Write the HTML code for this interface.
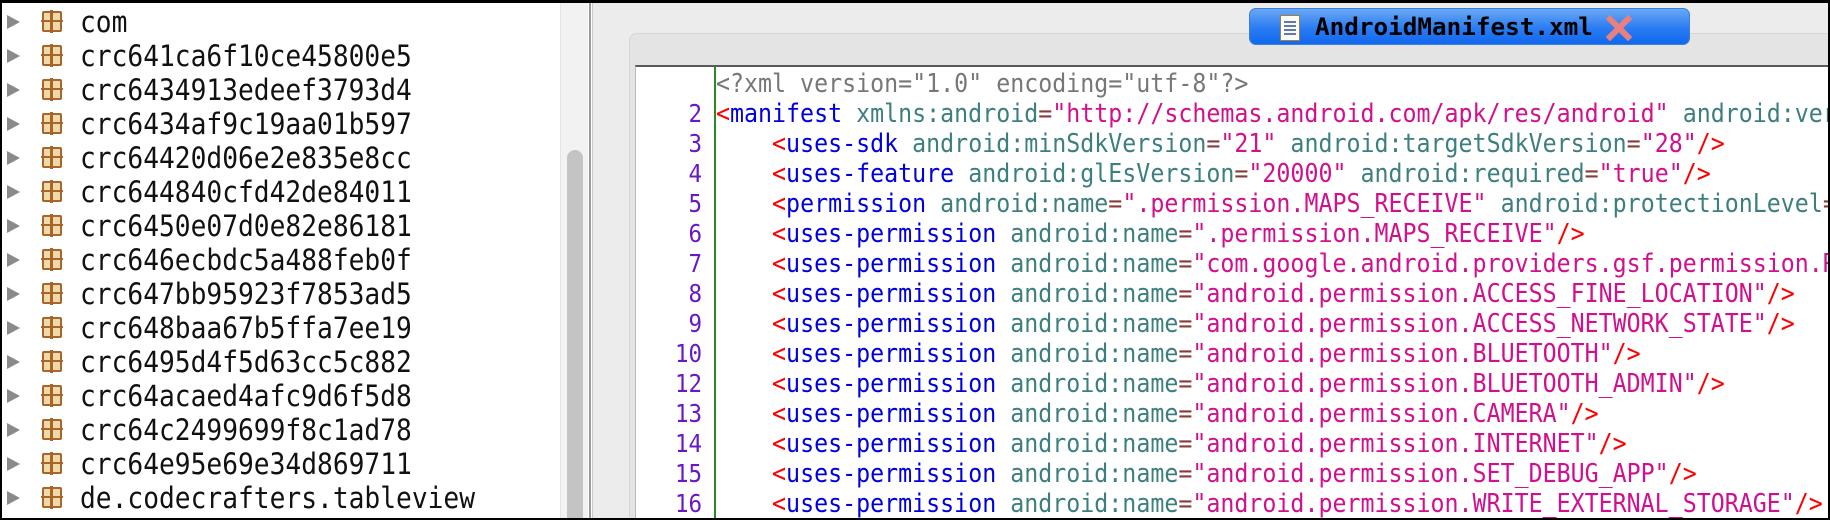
<!DOCTYPE html>
<html><head><meta charset="utf-8"><style>
*{margin:0;padding:0;box-sizing:border-box}
body{width:1830px;height:520px;overflow:hidden;background:#fff;position:relative;font-family:"DejaVu Sans Mono","Liberation Mono",monospace}
#frame{position:absolute;left:0;top:0;width:1830px;height:520px;border:2px solid #000;border-top-width:3px;pointer-events:none;z-index:10}
.tree{position:absolute;left:0;top:0;width:560px;height:520px;background:#fff;overflow:hidden}
.row{position:absolute;left:0;height:34px;width:560px;font-size:29px;line-height:34px;color:#111;white-space:pre}
.row .tri{position:absolute;left:7px;top:10px;width:0;height:0;border-left:13px solid #8a8a8a;border-top:7px solid transparent;border-bottom:7px solid transparent}
.row .ic{position:absolute;left:42px;top:6px;width:20px;height:21px;background:#f0d9a8;border:2px solid #a8652a;border-radius:2px}
.row .ic:before{content:"";position:absolute;left:6px;top:-3px;width:3px;height:23px;background:#a8652a}
.row .ic:after{content:"";position:absolute;left:-3px;top:7px;width:22px;height:2px;background:#a8652a}
.row .t{position:absolute;left:80px;top:0;transform:scaleX(0.905);transform-origin:0 0}
.track{position:absolute;left:560px;top:0;width:28px;height:520px;background:#f2f2f2;border-left:1px solid #e4e4e4}
.thumb{position:absolute;left:567px;top:150px;width:16px;height:370px;background:#c4c4c4;border-radius:8px 8px 0 0}
.div1{position:absolute;left:589px;top:0;width:2px;height:520px;background:#9a9a9a}
.div2{position:absolute;left:592px;top:0;width:1px;height:520px;background:#c8c8c8}
.right{position:absolute;left:593px;top:0;width:1237px;height:520px;background:#ececec}
.panel{position:absolute;left:629px;top:33px;width:1201px;height:487px;background:#e4e4e4;border:1px solid #d6d6d6;border-radius:8px 0 0 0}
.editor{position:absolute;left:635px;top:65px;width:1195px;height:455px;background:#fff;border-top:2px solid #5a5a5a;border-left:1px solid #bbb}
.clip{position:absolute;left:0;top:0;width:1828px;height:520px;overflow:hidden}
.green{position:absolute;left:714px;top:67px;width:2px;height:453px;background:#2a8a2a}
.ln{position:absolute;left:640px;width:62px;text-align:right;font-size:25px;line-height:30px;color:#6a18c4}
.ln span{display:inline-block;transform:scaleX(0.9);transform-origin:100% 0}
.code{position:absolute;left:716px;font-size:26px;line-height:30px;white-space:pre;color:#3d7f7f;transform:scaleX(0.895);transform-origin:0 0}
.r{color:#f00}.b{color:#0000dd}.a{color:#3d7f7f}.e{color:#8b3a3a}.v{color:#d0108c}.g{color:#777}
.tab{position:absolute;left:1249px;top:8px;width:441px;height:37px;border-radius:7px;background:linear-gradient(#6aa8f5,#2a7cf2 55%,#1168ee);border:1px solid #3b7fd8}
.tab .txt{position:absolute;left:65px;top:3px;font-size:24.3px;font-weight:bold;line-height:30px;color:#000}
.doc{position:absolute;left:30px;top:6px;width:20px;height:26px;background:#fafaf0;border:1px solid #a08040}
.doc i{position:absolute;left:3px;width:12px;height:2px;background:#5a7ab0}
.x{position:absolute;left:356px;top:6px;width:26px;height:26px}
</style></head><body>
<div class="tree">
<div class="row" style="top:5px"><span class="tri"></span><span class="ic"></span><span class="t">com</span></div>
<div class="row" style="top:39px"><span class="tri"></span><span class="ic"></span><span class="t">crc641ca6f10ce45800e5</span></div>
<div class="row" style="top:73px"><span class="tri"></span><span class="ic"></span><span class="t">crc6434913edeef3793d4</span></div>
<div class="row" style="top:107px"><span class="tri"></span><span class="ic"></span><span class="t">crc6434af9c19aa01b597</span></div>
<div class="row" style="top:141px"><span class="tri"></span><span class="ic"></span><span class="t">crc64420d06e2e835e8cc</span></div>
<div class="row" style="top:175px"><span class="tri"></span><span class="ic"></span><span class="t">crc644840cfd42de84011</span></div>
<div class="row" style="top:209px"><span class="tri"></span><span class="ic"></span><span class="t">crc6450e07d0e82e86181</span></div>
<div class="row" style="top:243px"><span class="tri"></span><span class="ic"></span><span class="t">crc646ecbdc5a488feb0f</span></div>
<div class="row" style="top:277px"><span class="tri"></span><span class="ic"></span><span class="t">crc647bb95923f7853ad5</span></div>
<div class="row" style="top:311px"><span class="tri"></span><span class="ic"></span><span class="t">crc648baa67b5ffa7ee19</span></div>
<div class="row" style="top:345px"><span class="tri"></span><span class="ic"></span><span class="t">crc6495d4f5d63cc5c882</span></div>
<div class="row" style="top:379px"><span class="tri"></span><span class="ic"></span><span class="t">crc64acaed4afc9d6f5d8</span></div>
<div class="row" style="top:413px"><span class="tri"></span><span class="ic"></span><span class="t">crc64c2499699f8c1ad78</span></div>
<div class="row" style="top:447px"><span class="tri"></span><span class="ic"></span><span class="t">crc64e95e69e34d869711</span></div>
<div class="row" style="top:481px"><span class="tri"></span><span class="ic"></span><span class="t">de.codecrafters.tableview</span></div>
</div>
<div class="track"></div><div class="thumb"></div>
<div class="div1"></div><div class="div2"></div>
<div class="right"></div>
<div class="panel"></div>
<div class="editor"></div>
<div class="green"></div>
<div class="tab"><div class="doc"><i style="top:5px"></i><i style="top:9px"></i><i style="top:13px"></i><i style="top:17px"></i></div><span class="txt">AndroidManifest.xml</span>
<svg class="x" viewBox="0 0 26 26"><path d="M4 4L22 22M22 4L4 22" stroke="#e88080" stroke-width="6" stroke-linecap="square"/></svg></div>
<div class="clip">
<div class="code" style="top:69px"><span class="g">&lt;?xml version="1.0" encoding="utf-8"?&gt;</span></div>
<div class="ln" style="top:99px"><span>2</span></div><div class="code" style="top:99px"><span class="r">&lt;</span><span class="b">manifest</span> xmlns:android<span class="e">=</span><span class="v">"http://schemas.android.com/apk/res/android"</span> android:ver</div>
<div class="ln" style="top:129px"><span>3</span></div><div class="code" style="top:129px">    <span class="r">&lt;</span><span class="b">uses-sdk</span> android:minSdkVersion<span class="e">=</span><span class="v">"21"</span> android:targetSdkVersion<span class="e">=</span><span class="v">"28"</span><span class="r">/&gt;</span></div>
<div class="ln" style="top:159px"><span>4</span></div><div class="code" style="top:159px">    <span class="r">&lt;</span><span class="b">uses-feature</span> android:glEsVersion<span class="e">=</span><span class="v">"20000"</span> android:required<span class="e">=</span><span class="v">"true"</span><span class="r">/&gt;</span></div>
<div class="ln" style="top:189px"><span>5</span></div><div class="code" style="top:189px">    <span class="r">&lt;</span><span class="b">permission</span> android:name<span class="e">=</span><span class="v">".permission.MAPS_RECEIVE"</span> android:protectionLevel<span class="e">=</span></div>
<div class="ln" style="top:219px"><span>6</span></div><div class="code" style="top:219px">    <span class="r">&lt;</span><span class="b">uses-permission</span> android:name<span class="e">=</span><span class="v">".permission.MAPS_RECEIVE"</span><span class="r">/&gt;</span></div>
<div class="ln" style="top:249px"><span>7</span></div><div class="code" style="top:249px">    <span class="r">&lt;</span><span class="b">uses-permission</span> android:name<span class="e">=</span><span class="v">"com.google.android.providers.gsf.permission.R</span></div>
<div class="ln" style="top:279px"><span>8</span></div><div class="code" style="top:279px">    <span class="r">&lt;</span><span class="b">uses-permission</span> android:name<span class="e">=</span><span class="v">"android.permission.ACCESS_FINE_LOCATION"</span><span class="r">/&gt;</span></div>
<div class="ln" style="top:309px"><span>9</span></div><div class="code" style="top:309px">    <span class="r">&lt;</span><span class="b">uses-permission</span> android:name<span class="e">=</span><span class="v">"android.permission.ACCESS_NETWORK_STATE"</span><span class="r">/&gt;</span></div>
<div class="ln" style="top:339px"><span>10</span></div><div class="code" style="top:339px">    <span class="r">&lt;</span><span class="b">uses-permission</span> android:name<span class="e">=</span><span class="v">"android.permission.BLUETOOTH"</span><span class="r">/&gt;</span></div>
<div class="ln" style="top:369px"><span>12</span></div><div class="code" style="top:369px">    <span class="r">&lt;</span><span class="b">uses-permission</span> android:name<span class="e">=</span><span class="v">"android.permission.BLUETOOTH_ADMIN"</span><span class="r">/&gt;</span></div>
<div class="ln" style="top:399px"><span>13</span></div><div class="code" style="top:399px">    <span class="r">&lt;</span><span class="b">uses-permission</span> android:name<span class="e">=</span><span class="v">"android.permission.CAMERA"</span><span class="r">/&gt;</span></div>
<div class="ln" style="top:429px"><span>14</span></div><div class="code" style="top:429px">    <span class="r">&lt;</span><span class="b">uses-permission</span> android:name<span class="e">=</span><span class="v">"android.permission.INTERNET"</span><span class="r">/&gt;</span></div>
<div class="ln" style="top:459px"><span>15</span></div><div class="code" style="top:459px">    <span class="r">&lt;</span><span class="b">uses-permission</span> android:name<span class="e">=</span><span class="v">"android.permission.SET_DEBUG_APP"</span><span class="r">/&gt;</span></div>
<div class="ln" style="top:489px"><span>16</span></div><div class="code" style="top:489px">    <span class="r">&lt;</span><span class="b">uses-permission</span> android:name<span class="e">=</span><span class="v">"android.permission.WRITE_EXTERNAL_STORAGE"</span><span class="r">/&gt;</span></div>
</div>
<div id="frame"></div>
</body></html>
